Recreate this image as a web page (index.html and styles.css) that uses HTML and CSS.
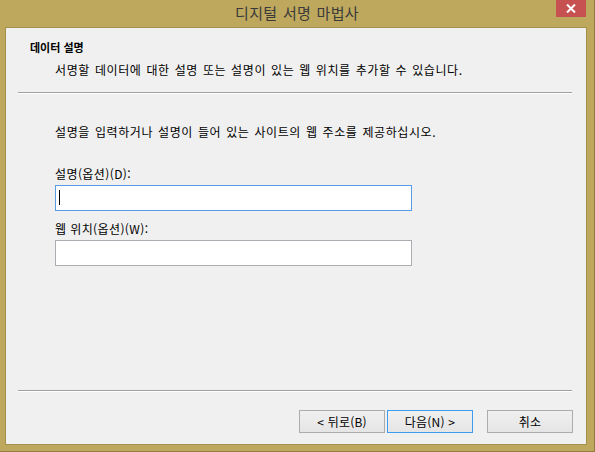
FILE: index.html
```html
<!DOCTYPE html>
<html lang="ko">
<head>
<meta charset="utf-8">
<title>디지털 서명 마법사</title>
<link rel="stylesheet" href="styles.css">
</head>
<body>
<div class="window">
  <div class="titlebar">
    <span class="title">디지털 서명 마법사</span>
    <div class="close">
      <svg width="10" height="9" viewBox="0 0 10 9"><path d="M1 0.5 L9 8.5 M9 0.5 L1 8.5" stroke="#fff" stroke-width="2" fill="none"/></svg>
    </div>
  </div>
  <div class="client">
    <div class="header">
      <div class="header-title">데이터 설명</div>
      <div class="header-sub">서명할 데이터에 대한 설명 또는 설명이 있는 웹 위치를 추가할 수 있습니다.</div>
    </div>
    <div class="sep"></div>
    <div class="body">
      <div class="intro">설명을 입력하거나 설명이 들어 있는 사이트의 웹 주소를 제공하십시오.</div>
      <div class="label first">설명(옵션)(D):</div>
      <div class="textbox focused"><span class="caret"></span></div>
      <div class="label">웹 위치(옵션)(W):</div>
      <div class="textbox"></div>
    </div>
    <div class="sep bottom"></div>
    <div class="buttons">
      <div class="btn">&lt; 뒤로(B)</div>
      <div class="btn default">다음(N) &gt;</div>
      <div class="btn cancel">취소</div>
    </div>
  </div>
</div>
</body>
</html>
```

FILE: styles.css
```css
html, body {
  margin: 0;
  padding: 0;
  background: #f0f0f0;
}
body {
  font-family: "Noto Sans CJK KR", "Noto Sans", sans-serif;
  font-size: 12px;
  color: #000;
}
.window {
  width: 594px;
  height: 451px;
  background: #bea85e;
  border-right: 1px solid #8e7d3f;
  border-bottom: 1px solid #8e7d3f;
  display: flex;
  flex-direction: column;
}
.titlebar {
  height: 27px;
  display: grid;
  grid-template-columns: 1fr auto 1fr;
  align-items: start;
}
.title {
  grid-column: 2;
  font-size: 15px;
  line-height: 25px;
  color: #3a3a3a;
  word-spacing: 1px;
  letter-spacing: 0.3px;
}
.close {
  grid-column: 3;
  justify-self: end;
  margin-right: 8px;
  width: 30px;
  height: 17px;
  background: #c75050;
  display: flex;
  align-items: center;
  justify-content: center;
}
.client {
  margin: 0 7px 0 5px;
  height: 416px;
  border: 1px solid #a38f4c;
  background: #f0f0f0;
  display: flex;
  flex-direction: column;
}
.header {
  padding-top: 11px;
}
.header-title {
  padding-left: 24px;
  font-weight: bold;
  font-size: 11px;
  line-height: 16px;
}
.header-sub {
  padding-left: 49px;
  margin-top: 7px;
  line-height: 16px;
  word-spacing: 1px;
  letter-spacing: 0.6px;
}
.sep {
  margin: 14px 14px 0 12px;
  height: 0;
  border-top: 1px solid #a0a0a0;
  border-bottom: 1px solid #ffffff;
}
.sep.bottom {
  margin-top: auto;
}
.body {
  padding: 30px 0 0 49px;
}
.intro {
  line-height: 16px;
  word-spacing: 1px;
  letter-spacing: 0.6px;
}
.label {
  line-height: 16px;
  margin-top: 10px;
  letter-spacing: 0.4px;
}
.label.first {
  margin-top: 26px;
}
.textbox {
  box-sizing: border-box;
  width: 357px;
  height: 26px;
  margin-top: 3px;
  background: #fff;
  border: 1px solid #abadb3;
  padding: 4px 0 0 3px;
}
.textbox.focused {
  border-color: #569de5;
}
.caret {
  display: block;
  width: 1px;
  height: 15px;
  background: #000;
}
.buttons {
  display: flex;
  justify-content: flex-end;
  gap: 2px;
  padding: 18px 13px 11px 0;
}
.btn {
  box-sizing: border-box;
  width: 86px;
  height: 23px;
  border: 1px solid #acacac;
  background: linear-gradient(#f0f0f0, #e5e5e5);
  display: flex;
  align-items: center;
  justify-content: center;
  line-height: 16px;
  letter-spacing: 0.2px;
}
.btn.default {
  border-color: #3c9cf0;
}
.btn.cancel {
  margin-left: 12px;
}
```
